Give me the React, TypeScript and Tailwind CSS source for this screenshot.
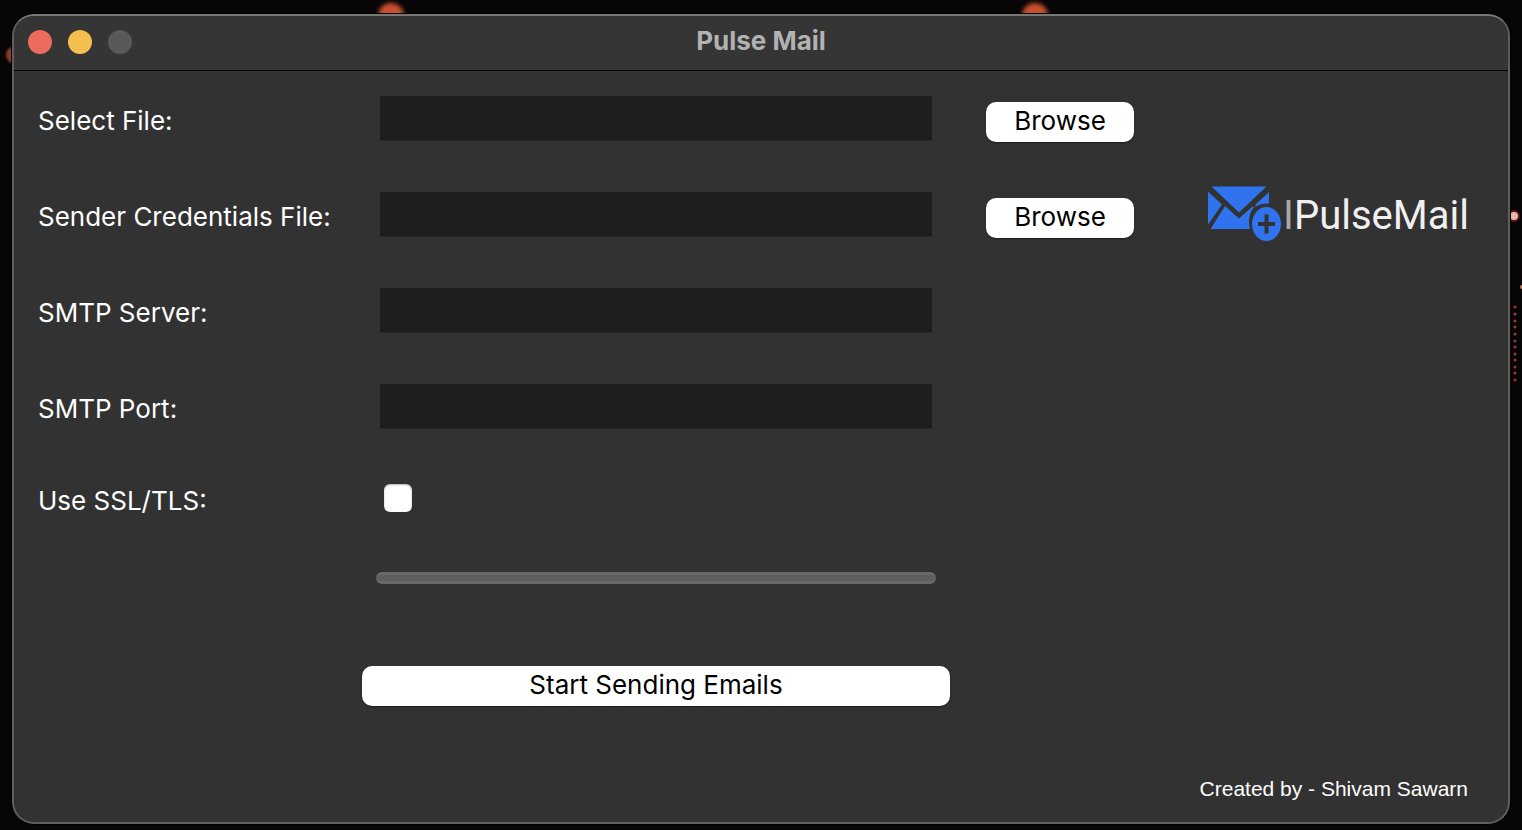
import type { ReactNode } from "react";

function Wallpaper() {
  const dots = [307, 314, 321, 327, 334, 341, 347, 354, 360, 367, 373, 380];
  return (
    <div aria-hidden="true" className="pointer-events-none absolute inset-0 overflow-hidden">
      <div className="absolute top-[3px] left-[378px] size-[26px] rounded-full bg-[#c9502f] blur-[2px]" />
      <div className="absolute top-[3px] left-[1022px] size-[26px] rounded-full bg-[#c9502f] blur-[2px]" />
      <div className="absolute top-[46px] left-[6px] size-[18px] rounded-full bg-[#8f3a2a] blur-[1px]" />
      <svg className="absolute top-0 right-0 h-[400px] w-3" viewBox="0 0 12 400">
        <circle cx="4" cy="216" r="6" fill="#7a2414" opacity="0.7" />
        <circle cx="4" cy="216" r="4" fill="#e5b8a8" />
        <circle cx="12" cy="287" r="2" fill="#d07a5c" />
        {dots.map((y) => (
          <circle key={y} cx="5" cy={y} r="1.6" fill="#8d3c28" />
        ))}
      </svg>
    </div>
  );
}

function Logo() {
  return (
    <div className="flex items-start gap-0.5">
      <svg aria-hidden="true" className="h-14 w-[73px] shrink-0" viewBox="0 0 73 56" fill="#2f73ee">
        <path d="M3.500 0.500H58.500L31 26.500Z" />
        <path d="M0 5.500L14 18.500L0 38.500Z" />
        <path d="M61 6V17.500C55 17 50.500 18.500 47.500 20.500V18.500Z" />
        <path d="M17 20L31 32.500L44.500 20.500L46 21.500C41.500 26 40 34 42 43H2.500Z" />
        <ellipse cx="58.500" cy="38" rx="14.500" ry="17" />
        <path d="M50 38H67M58.500 28.500V47.500" stroke="#323232" strokeWidth="4" fill="none" />
      </svg>
      <span className="pt-2 font-['Roboto',sans-serif] text-[40px] leading-[44px] whitespace-nowrap text-[#f0f0f0]">
        <span className="text-[#a8a8a8]">I</span>PulseMail
      </span>
    </div>
  );
}

function Button({ children, className = "" }: { children: ReactNode; className?: string }) {
  return (
    <button
      type="button"
      className={`h-10 rounded-[10px] bg-white pb-0.5 leading-[38px] text-black shadow-[0_1px_2px_rgba(0,0,0,0.4)] ${className}`}
    >
      {children}
    </button>
  );
}

function Field({ id, label, browse = false }: { id: string; label: string; browse?: boolean }) {
  return (
    <div className="col-span-3 grid h-12 grid-cols-subgrid">
      <label htmlFor={id} className="leading-[50px]">
        {label}
      </label>
      <div className="px-[18px]">
        <input
          id={id}
          type="text"
          className="block h-[45px] w-full border-b border-[#282828] bg-[#1e1e1e] px-2 text-white outline-none"
        />
      </div>
      {browse && <Button className="mt-1.5 ml-9">Browse</Button>}
    </div>
  );
}

export default function App() {
  return (
    <div className="relative min-h-screen bg-[#070506] px-3 pt-3.5 pb-1.5 font-['Inter',sans-serif] text-[26px] text-white">
      <Wallpaper />
      <main className="relative flex min-h-[810px] flex-col overflow-hidden rounded-[22px] border-2 border-[#5e5e5e] border-t-[#787878] bg-[#323232] shadow-[0_0_0_1px_#000]">
        <header className="grid h-[55px] grid-cols-[1fr_auto_1fr] items-center border-b border-black bg-[#353535] px-3.5 pb-0.5">
          <div className="flex gap-4">
            <button type="button" aria-label="Close" className="size-6 rounded-full bg-[#ec6a5e]" />
            <button type="button" aria-label="Minimize" className="size-6 rounded-full bg-[#f4bf4f]" />
            <button type="button" aria-label="Zoom" disabled className="size-6 rounded-full bg-[#595959]" />
          </div>
          <h1 className="pb-0.5 leading-9 font-bold text-[#b2b2b2]">Pulse Mail</h1>
        </header>

        <div className="flex grow items-start pt-[25px] pr-[42px] pl-6">
          <form className="grid grow grid-cols-[324px_minmax(0,1fr)_184px] gap-y-12">
            <Field id="recipients" label="Select File:" browse />
            <Field id="credentials" label="Sender Credentials File:" browse />
            <Field id="server" label="SMTP Server:" />
            <Field id="port" label="SMTP Port:" />
            <div className="col-span-3 grid h-11 grid-cols-subgrid">
              <label htmlFor="tls" className="leading-[42px]">
                Use SSL/TLS:
              </label>
              <div className="px-[22px] pt-1">
                <input
                  id="tls"
                  type="checkbox"
                  className="block size-7 appearance-none rounded-md bg-white shadow-[inset_0_1px_2px_rgba(0,0,0,0.3)] checked:bg-[#2f73ee]"
                />
              </div>
            </div>
            <div className="col-start-2 px-3.5">
              <div
                role="progressbar"
                aria-label="Sending progress"
                aria-valuenow={0}
                className="h-3 rounded-full border-y-[3px] border-[#686868] bg-[#5e5e5e]"
              />
            </div>
            <Button className="col-start-2 mt-[34px]">Start Sending Emails</Button>
          </form>
          <div className="ml-[74px] w-[258px] shrink-0 pt-[90px]">
            <Logo />
          </div>
        </div>

        <footer className="pr-10 pb-5 text-right font-['Liberation_Sans',sans-serif] text-[21px] leading-[26px]">
          Created by - Shivam Sawarn
        </footer>
      </main>
    </div>
  );
}
